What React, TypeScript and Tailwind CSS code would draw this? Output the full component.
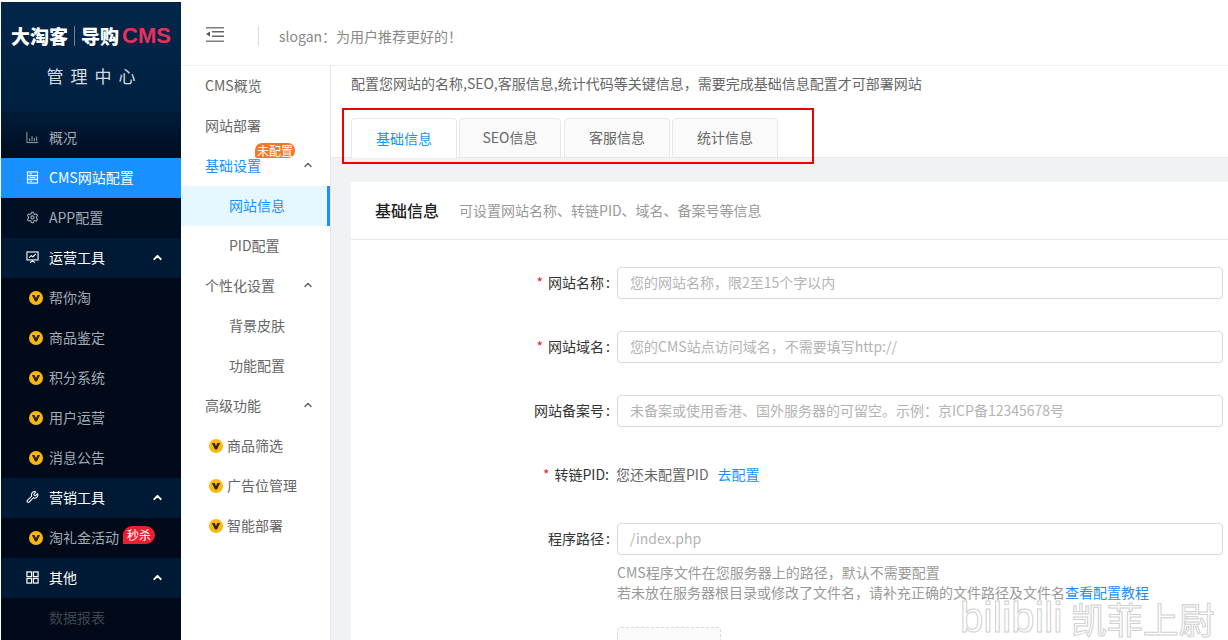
import { ChevronUp, Settings, Wrench } from 'lucide-react'

const FONT = "font-['Noto_Sans_CJK_SC','Noto_Sans',sans-serif]"

function VIcon() {
  return (
    <svg viewBox="0 0 14 14" className="w-[14px] h-[14px] shrink-0 mt-[1px]">
      <circle cx="7" cy="7" r="7" fill="#fbb80f" />
      <path d="M2.9 4 L5.6 4 L7 7.2 L8.4 4 L11.1 4 L7.9 10.6 L6.1 10.6 Z" fill="#2e2200" />
    </svg>
  )
}

function DocIcon() {
  return (
    <svg viewBox="0 0 14 14" className="w-[13px] h-[13px] shrink-0" fill="none" stroke="#fff" strokeWidth="1.2">
      <rect x="1.6" y="1" width="10.8" height="12" />
      <path d="M1.6 5h10.8M1.6 9h10.8" />
      <path d="M3.8 3h3M3.8 7h6.4M3.8 11h3" strokeWidth="1" />
    </svg>
  )
}

function ChartIcon() {
  return (
    <svg viewBox="0 0 14 14" className="w-[13px] h-[13px]" fill="none" stroke="#a3abb5" strokeWidth="1">
      <path d="M1 1v11.5h12" />
      <path d="M4 11V8M6.5 11V5.5M9 11V7.5M11.5 11V6" />
    </svg>
  )
}

function BoardIcon() {
  return (
    <svg viewBox="0 0 14 14" className="w-[14px] h-[14px]" fill="none" stroke="#fff" strokeWidth="1.2">
      <rect x="1" y="1.6" width="12" height="8.6" />
      <path d="M3.4 7.6 5.6 5.6 7.4 6.8 10.4 3.8" />
      <path d="M7 10.2v1.4M4.4 13 7 11.4 9.6 13" />
    </svg>
  )
}

function GridIcon() {
  return (
    <svg viewBox="0 0 14 14" className="w-[13px] h-[13px]" fill="none" stroke="#fff" strokeWidth="1.3">
      <rect x="1" y="1" width="5" height="5" />
      <rect x="8" y="1" width="5" height="5" />
      <rect x="1" y="8" width="5" height="5" />
      <rect x="8" y="8" width="5" height="5" />
    </svg>
  )
}

function MenuIcon() {
  return (
    <svg viewBox="0 0 18 15" className="w-[18px] h-[15px] ml-[25px] -mt-[3px]">
      <path d="M0 0h18v1.5H0zM0 13.5h18V15H0z" fill="#7d7d7d" />
      <path d="M6 4h12v1.5H6zM6 8.5h12V10H6z" fill="#666" />
      <path d="M4 4.5v5L0 7z" fill="#555" />
    </svg>
  )
}

function SideItem({ label, icon, active, first }: { label: string; icon: React.ReactNode; active?: boolean; first?: boolean }) {
  const bg = active ? 'bg-[#1890ff] text-white' : first ? 'bg-gradient-to-b from-[#011a36] to-[#000d20] text-[#a3abb5]' : 'bg-[#000f24] text-[#a3abb5]'
  return (
    <div className={`h-10 pb-[2px] flex items-center pl-[25px] gap-[10px] text-sm ${bg}`}>
      <span className="w-[13px] flex justify-center">{icon}</span>
      <span>{label}</span>
    </div>
  )
}

function SideHead({ label, icon }: { label: string; icon: React.ReactNode }) {
  return (
    <div className="h-10 pb-[2px] flex items-center pl-[25px] pr-[17px] gap-[10px] text-sm text-white bg-[#001a35]">
      <span className="w-[13px] flex justify-center">{icon}</span>
      <span className="flex-1">{label}</span>
      <ChevronUp size={13} strokeWidth={3.5} className="text-white" />
    </div>
  )
}

function SubItem({ label, badge }: { label: string; badge?: string }) {
  return (
    <div className="h-10 pb-[2px] flex items-center pl-[28px] gap-[6px] text-sm text-[#a3abb5] bg-[#000a19]">
      <VIcon />
      <span>{label}</span>
      {badge && (
        <span className="-ml-[2px] -mt-[5px] h-[18px] px-[4px] flex items-center bg-[#e8202f] text-white text-[12px] rounded-tl-[9px] rounded-tr-[9px] rounded-br-[9px]">
          {badge}
        </span>
      )}
    </div>
  )
}

function NavGroup({ label, active, badge }: { label: string; active?: boolean; badge?: string }) {
  return (
    <div className={`relative h-10 pb-[2px] flex items-center pl-[24px] pr-[16px] text-sm ${active ? 'text-[#1890ff]' : 'text-[#666]'}`}>
      <span className="flex-1">{label}</span>
      <ChevronUp size={12} strokeWidth={3} className="text-[#666]" />
      {badge && (
        <span className="absolute left-[74px] top-[-3px] h-[15px] px-[2px] flex items-center bg-[#f0792c] text-white text-[12px] rounded-t-[7px] rounded-br-[7px] rounded-bl-[2px]">
          {badge}
        </span>
      )}
    </div>
  )
}

function NavLink({ label, active }: { label: string; active?: boolean }) {
  return (
    <div className={`h-10 pb-[2px] flex items-center pl-[48px] text-sm ${active ? 'bg-[#e6f7ff] text-[#1890ff] border-r-[3px] border-[#1890ff]' : 'text-[#666]'}`}>
      {label}
    </div>
  )
}

function NavV({ label }: { label: string }) {
  return (
    <div className="h-10 pb-[2px] flex items-center pl-[28px] gap-[4px] text-sm text-[#666]">
      <VIcon />
      <span>{label}</span>
    </div>
  )
}

function Field({ label, required, placeholder }: { label: string; required?: boolean; placeholder: string }) {
  return (
    <div className="flex items-center h-8 pr-[5px]">
      <label className="w-[266px] pb-[2px] text-right text-sm text-[#333] pr-[7px]">
        {required && <span className="text-[#f5222d] mr-[5px]">*</span>}
        {label}<span className="ml-[2px]">:</span>
      </label>
      <div className="flex-1 h-8 pb-[2px] border border-[#d9d9d9] rounded-[4px] flex items-center px-[12px] text-sm text-[#b3b3b3] bg-white whitespace-nowrap">
        {placeholder}
      </div>
    </div>
  )
}

export default function App() {
  return (
    <div className={`${FONT} w-[1228px] h-[640px] overflow-hidden flex bg-white relative`}>
      {/* left dark sidebar */}
      <aside className="w-[180px] ml-[1px] mt-[2px] shrink-0 flex flex-col bg-[#000a19]">
        <div className="h-[110px] bg-gradient-to-b from-[#02264a] to-[#012040] flex flex-col items-center">
          <div className="mt-[20px] flex items-center font-['Liberation_Sans','Noto_Sans_CJK_SC',sans-serif] font-bold text-[22px] leading-[28px] text-white whitespace-nowrap">
            <span className={`${FONT} font-black text-[19px]`}>大淘客</span>
            <span className="w-px h-[20px] bg-[#6f8298] mx-[6px]" />
            <span className={`${FONT} font-black text-[19px]`}>导购</span>
            <span className="text-[#e8305a] ml-[3px]">CMS</span>
          </div>
          <div className="mt-[14px] text-[17px] leading-[24px] tracking-[7px] text-[#d5dbe2] pl-[7px]">管理中心</div>
        </div>
        <div className="h-[6px] bg-[#011a36]" />
        <SideItem first label="概况" icon={<ChartIcon />} />
        <SideItem label="CMS网站配置" active icon={<DocIcon />} />
        <SideItem label="APP配置" icon={<Settings size={13} className="text-[#a3abb5]" />} />
        <SideHead label="运营工具" icon={<BoardIcon />} />
        <SubItem label="帮你淘" />
        <SubItem label="商品鉴定" />
        <SubItem label="积分系统" />
        <SubItem label="用户运营" />
        <SubItem label="消息公告" />
        <SideHead label="营销工具" icon={<Wrench size={14} className="text-white" />} />
        <SubItem label="淘礼金活动" badge="秒杀" />
        <SideHead label="其他" icon={<GridIcon />} />
        <div className="h-10 pb-[2px] flex items-center pl-[48px] text-sm text-[#3d4550] bg-[#000a19]">数据报表</div>
      </aside>

      <div className="flex-1 min-w-0 flex flex-col">
        {/* top bar */}
        <header className="h-[66px] pt-[6px] shrink-0 flex items-center border-b border-[#f0f0f0] bg-white">
          <MenuIcon />
          <span className="w-px h-[20px] bg-[#ddd] ml-[34px]" />
          <span className="ml-[20px] text-sm text-[#888]">slogan&#xFF1A;为用户推荐更好的&#xFF01;</span>
        </header>

        <div className="flex-1 min-h-0 flex">
          {/* second nav */}
          <nav className="w-[150px] shrink-0 bg-white border-r border-[#e8e8e8]">
            <div className="h-10 pb-[2px] flex items-center pl-[24px] text-sm text-[#666]">CMS概览</div>
            <div className="h-10 pb-[2px] flex items-center pl-[24px] text-sm text-[#666]">网站部署</div>
            <NavGroup label="基础设置" active badge="未配置" />
            <NavLink label="网站信息" active />
            <NavLink label="PID配置" />
            <NavGroup label="个性化设置" />
            <NavLink label="背景皮肤" />
            <NavLink label="功能配置" />
            <NavGroup label="高级功能" />
            <NavV label="商品筛选" />
            <NavV label="广告位管理" />
            <NavV label="智能部署" />
          </nav>

          {/* main */}
          <main className="flex-1 min-w-0 bg-[#f0f2f5] flex flex-col">
            <div className="bg-white h-[92px] shrink-0 px-[20px] flex flex-col border-b border-[#e8e8e8]">
              <p className="text-sm leading-[34px] text-[#666] whitespace-nowrap">配置您网站的名称,SEO,客服信息,统计代码等关键信息&#xFF0C;需要完成基础信息配置才可部署网站</p>
              <div className="mt-[18px] flex items-end gap-[2px] h-[40px]">
                <div className="w-[106px] h-[40px] pb-[2px] flex items-center justify-center text-sm text-[#1890ff] bg-white border border-b-0 border-[#e8e8e8] rounded-t-[4px]">基础信息</div>
                <div className="w-[102px] h-[40px] pb-[2px] flex items-center justify-center text-sm text-[#666] bg-[#fafafa] border border-[#e8e8e8] rounded-t-[4px]">SEO信息</div>
                <div className="w-[106px] h-[40px] pb-[2px] ml-[1px] flex items-center justify-center text-sm text-[#666] bg-[#fafafa] border border-[#e8e8e8] rounded-t-[4px]">客服信息</div>
                <div className="w-[106px] h-[40px] pb-[2px] flex items-center justify-center text-sm text-[#666] bg-[#fafafa] border border-[#e8e8e8] rounded-t-[4px]">统计信息</div>
              </div>
            </div>

            <section className="mt-[24px] ml-[20px] flex-1 bg-white">
              <div className="h-[58px] pb-[2px] flex items-center pl-[24px] border-b border-[#e8e8e8]">
                <span className="text-base font-medium text-[#222]">基础信息</span>
                <span className="ml-[20px] text-sm text-[#999]">可设置网站名称、转链PID、域名、备案号等信息</span>
              </div>
              <div className="pt-[27px] flex flex-col gap-[32px]">
                <Field label="网站名称" required placeholder={'您的网站名称\uFF0C限2至15个字以内'} />
                <Field label="网站域名" required placeholder={'您的CMS站点访问域名\uFF0C不需要填写http://'} />
                <Field label="网站备案号" placeholder={'未备案或使用香港、国外服务器的可留空。示例\uFF1A京ICP备12345678号'} />
                <div className="flex items-center h-[20px] mt-[6px] pb-[2px] text-sm">
                  <label className="w-[258px] text-right text-[#333]">
                    <span className="text-[#f5222d] mr-[5px]">*</span>转链PID:
                  </label>
                  <span className="text-[#666] ml-[7px]">您还未配置PID</span>
                  <span className="text-[#1890ff] ml-[9px]">去配置</span>
                </div>
                <div className="mt-[6px]">
                  <Field label="程序路径" placeholder="/index.php" />
                  <div className="ml-[266px] mt-[7px] text-sm leading-[20px] text-[#999] whitespace-nowrap">
                    <p>CMS程序文件在您服务器上的路径&#xFF0C;默认不需要配置</p>
                    <p>若未放在服务器根目录或修改了文件名&#xFF0C;请补充正确的文件路径及文件名<span className="text-[#1890ff]">查看配置教程</span></p>
                  </div>
                  <div className="ml-[266px] mt-[25px] w-[104px] h-[60px] border border-dashed border-[#d9d9d9] rounded-[4px] bg-[#fafafa]" />
                </div>
              </div>
            </section>
          </main>
        </div>
      </div>

      {/* annotation box drawn over the screenshot */}
      <div className="absolute left-[342px] top-[108px] w-[472px] h-[56px] border-2 border-[#f00000]" />
      {/* watermark */}
      <div className="absolute left-[960px] top-[597px] flex items-center leading-[42px] text-white/40 [-webkit-text-stroke:1px_#cfcfcf] whitespace-nowrap">
        <span className="text-[42px] font-['Liberation_Sans',sans-serif]">bilibili</span>
        <span className="ml-[8px] text-[36px]">凯菲上尉</span>
      </div>
    </div>
  )
}
